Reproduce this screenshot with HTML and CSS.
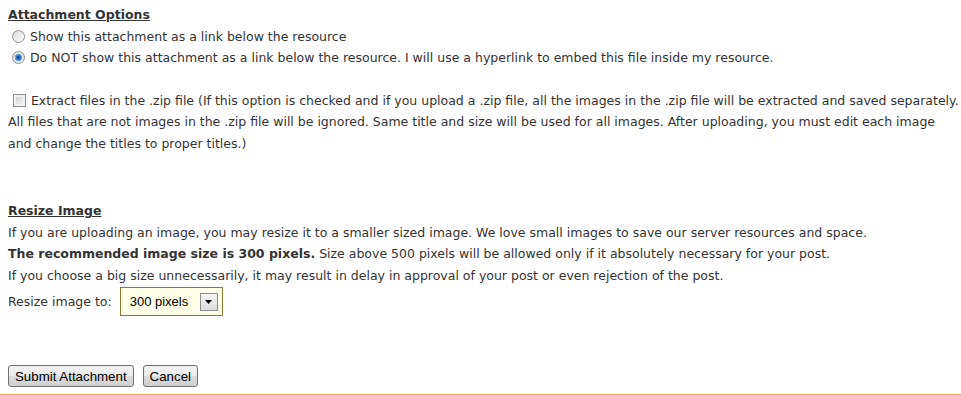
FILE: index.html
```html
<!DOCTYPE html>
<html lang="en">
<head>
    <meta charset="UTF-8">
    <title>Attachment Options</title>
    <link rel="stylesheet" href="styles.css">
</head>
<body>
<form class="attach-form" onsubmit="return false;">
    <div class="section">
        <div class="section-title">Attachment Options</div>
        <label class="opt-line">
            <input type="radio" name="showlink" class="opt-radio">
            Show this attachment as a link below the resource
        </label>
        <label class="opt-line">
            <input type="radio" name="showlink" class="opt-radio" checked>
            Do NOT show this attachment as a link below the resource. I will use a hyperlink to embed this file inside my resource.
        </label>
    </div>

    <div class="section zip-section">
        <label class="zip-text">
            <input type="checkbox" class="opt-check">
            Extract files in the .zip file (If this option is checked and if you upload a .zip file, all the images in the .zip file will be extracted and saved separately. All files that are not images in the .zip file will be ignored. Same title and size will be used for all images. After uploading, you must edit each image and change the titles to proper titles.)
        </label>
    </div>

    <div class="section resize-section">
        <div class="section-title">Resize Image</div>
        <div class="text-line">If you are uploading an image, you may resize it to a smaller sized image. We love small images to save our server resources and space.</div>
        <div class="text-line"><b>The recommended image size is 300 pixels.</b> Size above 500 pixels will be allowed only if it absolutely necessary for your post.</div>
        <div class="text-line">If you choose a big size unnecessarily, it may result in delay in approval of your post or even rejection of the post.</div>
        <div class="resize-row">
            <span>Resize image to:</span>
            <div class="fake-select">
                <span class="fake-select-value">300 pixels</span>
                <span class="fake-select-btn">
                    <svg width="7" height="4" viewBox="0 0 7 4"><path d="M0 0h7L3.5 4z" fill="#000"/></svg>
                </span>
            </div>
        </div>
    </div>

    <div class="btn-row">
        <button class="win-btn">Submit Attachment</button>
        <button class="win-btn">Cancel</button>
    </div>
</form>
<div class="bottom-rule"></div>
</body>
</html>
```

FILE: styles.css
```css
body {
    margin: 0;
    padding: 4px 0 0 8px;
    background: #fff;
    font-family: "DejaVu Sans", Verdana, sans-serif;
    font-size: 12.5px;
    line-height: 21.5px;
    color: #333;
}

.section-title {
    font-weight: bold;
    text-decoration: underline;
}

.opt-line {
    display: block;
}

.opt-radio,
.opt-check {
    -webkit-appearance: none;
    appearance: none;
    width: 13px;
    height: 13px;
    margin: 0 1px 0 4px;
    vertical-align: -2px;
    border: 1px solid #8f8f8f;
    background: linear-gradient(135deg, #d8d8d8, #f6f6f6 70%, #fff);
}

.opt-radio {
    border-radius: 50%;
}

.opt-radio:checked {
    background: radial-gradient(circle at 50% 50%, #0c3c78 0, #2e6fc0 2px, #76b2e8 3.5px, #e6e6e6 4px, #f4f4f4 100%);
}

.opt-check {
    margin-left: 5px;
    margin-right: 1px;
    border-color: #8e8f8f;
    box-shadow: inset 0 0 0 2px #f1f1f1;
    background: linear-gradient(135deg, #c9c9c9, #ededed 70%, #f8f8f8);
}

.zip-section {
    margin-top: 21px;
    margin-right: 2px;
}

.resize-section {
    margin-top: 46px;
}

.resize-row {
    display: flex;
    align-items: center;
    gap: 8px;
    margin-top: 1px;
}

.fake-select {
    display: flex;
    align-items: center;
    justify-content: space-between;
    box-sizing: border-box;
    width: 103px;
    height: 29px;
    padding: 0 4px 0 9px;
    border: 1px solid #8a7a2e;
    background: #fffee6;
    font-family: "Liberation Sans", Arial, sans-serif;
    font-size: 13px;
    color: #000;
}

.fake-select-btn {
    display: flex;
    align-items: center;
    justify-content: center;
    width: 16px;
    height: 16px;
    border: 1px solid #8e8e8e;
    background: linear-gradient(#f4f4f4, #dcdcdc);
}

.btn-row {
    display: flex;
    gap: 9px;
    margin-top: 49px;
}

.win-btn {
    height: 22px;
    padding: 0 6px;
    border: 1px solid #707070;
    border-radius: 3px;
    background: linear-gradient(#f2f2f2 0%, #ebebeb 50%, #dddddd 51%, #cfcfcf 100%);
    font-family: "Liberation Sans", Arial, sans-serif;
    font-size: 13.3px;
    color: #000;
}

.bottom-rule {
    margin: 7px 0 0 -8px;
    height: 2px;
    background: #f7a431;
}
```
